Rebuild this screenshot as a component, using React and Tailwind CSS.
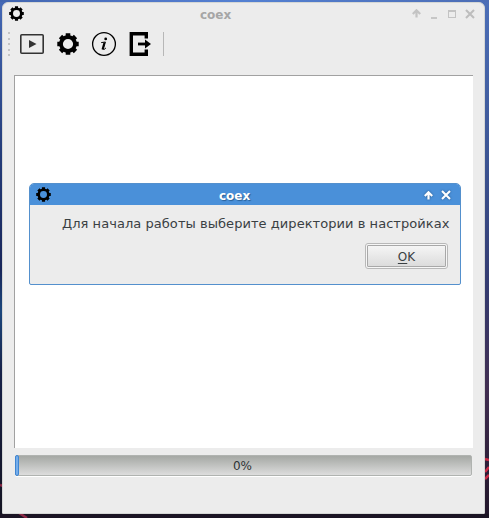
function Gear({ className }) {
  return (
    <svg className={className} viewBox="0 0 22 22" fill="none" stroke="#000">
      <circle cx="11" cy="11" r="7" strokeWidth="3.8" />
      <g strokeWidth="4.6">
        <path d="M11 0.3V4M11 18V21.7M0.3 11H4M18 11H21.7" />
        <path d="M3.5 3.5L6 6M16 16L18.5 18.5M3.5 18.5L6 16M16 6L18.5 3.5" />
      </g>
    </svg>
  );
}

function UpArrow({ color }) {
  return (
    <svg className="h-[9px] w-[9px]" viewBox="0 0 9 9" fill="none" stroke={color} strokeWidth="2.2">
      <path d="M4.5 8.5V1.5M0.8 5L4.5 1.3L8.2 5" />
    </svg>
  );
}

function Cross({ color }) {
  return (
    <svg className="h-[10px] w-[10px]" viewBox="0 0 10 10" fill="none" stroke={color} strokeWidth="2.1">
      <path d="M1 1L9 9M9 1L1 9" />
    </svg>
  );
}

function TitleBar() {
  return (
    <header className="flex h-[23px] shrink-0 items-start pl-[6px] pr-[9px]">
      <Gear className="mt-[2.5px] h-[15px] w-[15px]" />
      <h1 className="ml-[176px] mt-[4px] text-[12px] font-bold leading-[16px] text-[#a6a6a6]">coex</h1>
      <div className="ml-auto mt-[6px] flex h-[10px] items-end">
        <div className="mb-px mr-[10px]"><UpArrow color="#c3c3c3" /></div>
        <div className="mr-[11px] h-[2px] w-[6px] shrink-0 bg-[#c6c6c6]" />
        <div className="mb-px mr-[9px] h-[8px] w-[8px] shrink-0 border border-t-2 border-[#c3c3c3]" />
        <Cross color="#bdbdbd" />
      </div>
    </header>
  );
}

function Toolbar() {
  return (
    <div className="flex h-[36px] shrink-0 items-center pl-[5px]">
      <div className="flex w-[2px] flex-col gap-[3.5px]">
        {[0, 1, 2, 3, 4].map((n) => (
          <div key={n} className="h-[2px] w-[2px] bg-[#c5c5c5]" />
        ))}
      </div>
      <svg className="ml-[9px] h-[24px] w-[26px]" viewBox="0 0 26 24" fill="none">
        <rect x="1.8" y="2.8" width="22.4" height="18.4" rx="1" stroke="#333" strokeWidth="1.6" />
        <path d="M10 8V16L17.5 12Z" fill="#333" />
      </svg>
      <Gear className="ml-[12px] h-[22px] w-[22px]" />
      <svg className="ml-[12px] h-[26px] w-[26px]" viewBox="0 0 26 26" fill="none">
        <circle cx="13" cy="13" r="11.4" stroke="#000" strokeWidth="1.3" />
        <circle cx="14.7" cy="7.9" r="1.4" fill="#000" />
        <path d="M10.2 11.6L14.4 11L12.3 18.3Q12.4 19.4 14.9 17" stroke="#000" strokeWidth="1" />
        <path d="M13.4 11.4L11.4 18.6" stroke="#000" strokeWidth="1.8" />
      </svg>
      <svg className="ml-[12px] h-[24px] w-[22px]" viewBox="0 0 22 24" fill="none">
        <path d="M17.3 6.5V1.8H2.3V22.2H17.3V17.5" stroke="#000" strokeWidth="3.4" />
        <path d="M9 12H17" stroke="#000" strokeWidth="2.8" />
        <path d="M16 7.4V16.6L22 12Z" fill="#000" />
      </svg>
      <div className="ml-[12px] h-[24px] w-px bg-[#b7b7b7]" />
    </div>
  );
}

function Dialog() {
  return (
    <section className="absolute left-[29px] top-[183px] flex h-[102px] w-[432px] flex-col overflow-hidden rounded-b-[2px] rounded-t-[5px] border border-[#5490cd] bg-[#ececec]">
      <header className="flex h-[21px] shrink-0 items-start bg-[#4a90d9] pl-[6px] pr-[9px]">
        <Gear className="mt-[2.5px] h-[15px] w-[15px]" />
        <h2 className="ml-[168px] mt-[4px] text-[12px] font-bold leading-[16px] text-white [text-shadow:1px_1px_1px_#285f97]">coex</h2>
        <div className="ml-auto mt-[6px] flex items-end gap-[8px] drop-shadow-[0_0_1px_#28598a]">
          <UpArrow color="#fff" />
          <Cross color="#fff" />
        </div>
      </header>
      <p className="ml-[32px] mt-[10px] whitespace-nowrap text-[13px] leading-[17px] tracking-[0.05px] text-[#3a4043]">
        Для начала работы выберите директории в настройках
      </p>
      <button className="ml-auto mr-[12px] mt-[11px] h-[26px] w-[83px] rounded-[3px] border border-[#b8b8b8] bg-[#f6f6f6] p-px">
        <span className="flex h-full items-center justify-center rounded-[1px] border border-[#a8a8a8] bg-linear-to-b from-[#f5f5f5] to-[#dcdcdc] pt-[2px] text-[12px] text-[#3a4043]">
          <span className="underline underline-offset-2">O</span>K
        </span>
      </button>
    </section>
  );
}

export default function App() {
  return (
    <main className="relative h-[518px] w-[489px] overflow-hidden bg-linear-to-b from-[#4b72bd] via-[#263f79] via-45% to-[#1a1422] pl-[2px] pt-[2px] font-['DejaVu_Sans',sans-serif]">
      <svg className="absolute left-0 top-0 h-[518px] w-[489px]" viewBox="0 0 489 518" fill="none">
        <defs>
          <linearGradient id="left" x1="0" y1="0" x2="0" y2="1">
            <stop offset="0" stopColor="#4569b6" />
            <stop offset=".3" stopColor="#243c79" />
            <stop offset=".52" stopColor="#19265a" />
            <stop offset=".6" stopColor="#1c477d" />
            <stop offset=".72" stopColor="#172148" />
            <stop offset="1" stopColor="#141321" />
          </linearGradient>
          <linearGradient id="right" x1="0" y1="0" x2="0" y2="1">
            <stop offset="0" stopColor="#4c6fb8" />
            <stop offset=".3" stopColor="#3c5594" />
            <stop offset=".55" stopColor="#343b70" />
            <stop offset=".75" stopColor="#412e51" />
            <stop offset="1" stopColor="#21162a" />
          </linearGradient>
          <linearGradient id="top">
            <stop offset="0" stopColor="#4165af" />
            <stop offset=".3" stopColor="#5177c8" />
            <stop offset=".5" stopColor="#5380d2" />
            <stop offset="1" stopColor="#4c6db5" />
          </linearGradient>
        </defs>
        <path d="M0 0H8V518H0Z" fill="url(#left)" />
        <path d="M479 0H489V518H479Z" fill="url(#right)" />
        <path d="M0 0H489V2H0Z" fill="url(#top)" />
        <path d="M0 514H489V518H0Z" fill="#1b1424" />
        <path d="M0 485L3 486M19 513L27 518" stroke="#8a2845" strokeWidth="2.5" />
        <path d="M485 459L489 460M485 479L489 475M485 472L489 467" stroke="#c82c47" strokeWidth="2.5" />
      </svg>
      <div className="relative flex h-[512px] w-[483px] flex-col rounded-b-[1px] rounded-t-[6px] border border-[#d5d7d5] bg-[#ececec]">
        <TitleBar />
        <Toolbar />
        <div className="ml-[11px] mt-[13px] h-[373px] w-[459px] shrink-0 border-l border-t border-[#a1a1a1] bg-white" />
        <div className="ml-[12px] mt-[7px] flex h-[21px] w-[457px] shrink-0 rounded-[2px] border border-[#b0b3b0] bg-linear-to-b from-[#a5a8a4] to-[#dddddd] shadow-[0_1px_0_#fff]">
          <div className="-my-px -ml-px w-[4px] shrink-0 rounded-[2px] border border-[#3f86d2] bg-[#75adea]" />
          <div className="flex-1 pr-[5px] text-center text-[12px] leading-[20px] text-[#2e3436]">0%</div>
        </div>
      </div>
      <Dialog />
    </main>
  );
}
